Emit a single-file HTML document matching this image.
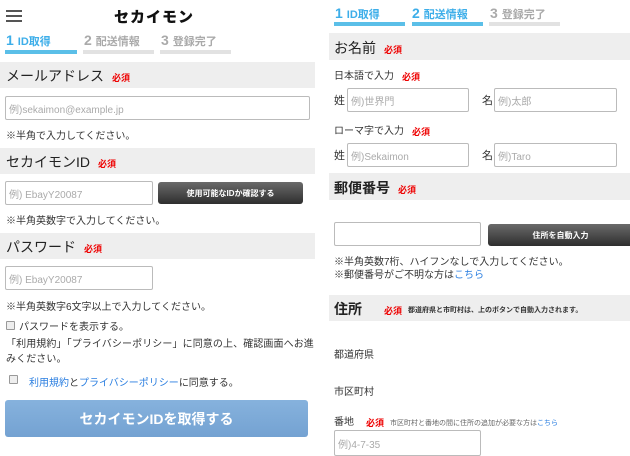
<!DOCTYPE html>
<html><head><meta charset="utf-8"><style>
*{margin:0;padding:0;box-sizing:border-box}
body{width:630px;height:450px;overflow:hidden;background:#fff;font-family:"Liberation Sans","Noto Sans CJK JP",sans-serif;color:#333;position:relative}
.a{position:absolute;white-space:nowrap}
.hd{position:absolute;background:#eeeeee}
.ht{position:absolute;font-size:14px;color:#222;white-space:nowrap}
.req{color:#e00;font-size:9px;font-weight:bold;margin-left:8px;vertical-align:middle}
.in{position:absolute;border:1px solid #bbb;border-radius:2px;background:#fff;font-size:10px;color:#aaa;padding-left:3px;display:flex;align-items:center}
.sm{font-size:10px;color:#333}
.btn{position:absolute;border-radius:3px;background:linear-gradient(#6a6a6a,#2e2e2e);color:#fff;font-size:8px;font-weight:bold;display:flex;align-items:center;justify-content:center}
.bar{position:absolute;height:4px}
.st{position:absolute;font-size:11px;font-weight:bold;white-space:nowrap}
.st b{font-size:14px;margin-right:4px}
.cb{position:absolute;width:9px;height:9px;border:1px solid #999;background:#eee;border-radius:1px}
a{color:#2a7ee0;text-decoration:none}
</style></head><body>
<div class="a" style="left:6px;top:10px;width:16px;height:2px;background:#555"></div>
<div class="a" style="left:6px;top:15px;width:16px;height:2px;background:#555"></div>
<div class="a" style="left:6px;top:20px;width:16px;height:2px;background:#555"></div>
<div class="a" style="left:114px;top:6px;font-size:15px;font-weight:900;color:#111;letter-spacing:1px">セカイモン</div>
<div class="st" style="left:6px;top:32px;color:#3daee9"><b>1</b>ID取得</div>
<div class="st" style="left:84px;top:32px;color:#aaa"><b>2</b>配送情報</div>
<div class="st" style="left:161px;top:32px;color:#aaa"><b>3</b>登録完了</div>
<div class="bar" style="left:5px;top:50px;width:72px;background:#5bbfe8"></div>
<div class="bar" style="left:83px;top:50px;width:71px;background:#e2e2e2"></div>
<div class="bar" style="left:160px;top:50px;width:71px;background:#e2e2e2"></div>

<div class="hd" style="left:0;top:62px;width:315px;height:26px"></div>
<div class="ht" style="left:6px;top:66px">メールアドレス<span class="req">必須</span></div>
<div class="in" style="left:5px;top:96px;width:305px;height:24px">例)sekaimon@example.jp</div>
<div class="a sm" style="left:6px;top:127px">※半角で入力してください。</div>

<div class="hd" style="left:0;top:148px;width:315px;height:26px"></div>
<div class="ht" style="left:6px;top:152px">セカイモンID<span class="req">必須</span></div>
<div class="in" style="left:5px;top:181px;width:148px;height:24px">例) EbayY20087</div>
<div class="btn" style="left:158px;top:182px;width:145px;height:22px">使用可能なIDか確認する</div>
<div class="a sm" style="left:6px;top:212px">※半角英数字で入力してください。</div>

<div class="hd" style="left:0;top:233px;width:315px;height:26px"></div>
<div class="ht" style="left:6px;top:237px">パスワード<span class="req">必須</span></div>
<div class="in" style="left:5px;top:266px;width:148px;height:24px">例) EbayY20087</div>
<div class="a sm" style="left:6px;top:298px">※半角英数字6文字以上で入力してください。</div>
<div class="cb" style="left:6px;top:321px"></div>
<div class="a sm" style="left:19px;top:318px">パスワードを表示する。</div>
<div class="a sm" style="left:6px;top:337px;line-height:15px;white-space:normal;width:309px;letter-spacing:0.1px">「利用規約」「プライバシーポリシー」に同意の上、確認画面へお進みください。</div>
<div class="cb" style="left:9px;top:375px"></div>
<div class="a sm" style="left:29px;top:374px"><a>利用規約</a>と<a>プライバシーポリシー</a>に同意する。</div>
<div class="a" style="left:5px;top:400px;width:303px;height:37px;border-radius:3px;background:linear-gradient(#86b2dd,#74a2d2);color:#fff;font-size:14px;font-weight:bold;display:flex;align-items:center;justify-content:center">セカイモンIDを取得する</div>

<div class="st" style="left:335px;top:5px;color:#3daee9"><b>1</b>ID取得</div>
<div class="st" style="left:412px;top:5px;color:#3daee9"><b>2</b>配送情報</div>
<div class="st" style="left:490px;top:5px;color:#aaa"><b>3</b>登録完了</div>
<div class="bar" style="left:334px;top:22px;width:71px;background:#5bbfe8"></div>
<div class="bar" style="left:412px;top:22px;width:71px;background:#5bbfe8"></div>
<div class="bar" style="left:489px;top:22px;width:71px;background:#e2e2e2"></div>

<div class="hd" style="left:329px;top:33px;width:301px;height:27px"></div>
<div class="ht" style="left:334px;top:38px">お名前<span class="req">必須</span></div>
<div class="a sm" style="left:334px;top:67px">日本語で入力<span class="req">必須</span></div>
<div class="a sm" style="left:334px;top:92px;font-size:11px">姓</div>
<div class="in" style="left:347px;top:88px;width:122px;height:24px">例)世界門</div>
<div class="a sm" style="left:482px;top:92px;font-size:11px">名</div>
<div class="in" style="left:494px;top:88px;width:123px;height:24px">例)太郎</div>
<div class="a sm" style="left:334px;top:122px">ローマ字で入力<span class="req">必須</span></div>
<div class="a sm" style="left:334px;top:147px;font-size:11px">姓</div>
<div class="in" style="left:347px;top:143px;width:122px;height:24px">例)Sekaimon</div>
<div class="a sm" style="left:482px;top:147px;font-size:11px">名</div>
<div class="in" style="left:494px;top:143px;width:123px;height:24px">例)Taro</div>

<div class="hd" style="left:329px;top:173px;width:301px;height:27px"></div>
<div class="ht" style="left:334px;top:178px;font-weight:bold">郵便番号<span class="req">必須</span></div>
<div class="in" style="left:334px;top:222px;width:147px;height:24px"></div>
<div class="btn" style="left:488px;top:224px;width:145px;height:22px">住所を自動入力</div>
<div class="a sm" style="left:334px;top:253px">※半角英数7桁、ハイフンなしで入力してください。</div>
<div class="a sm" style="left:334px;top:266px">※郵便番号がご不明な方は<a>こちら</a></div>

<div class="hd" style="left:329px;top:295px;width:301px;height:26px"></div>
<div class="ht" style="left:334px;top:299px;font-weight:bold">住所<span class="req" style="margin-left:22px">必須</span><span style="font-size:7px;font-weight:bold;color:#333;margin-left:6px;vertical-align:middle">都道府県と市町村は、上のボタンで自動入力されます。</span></div>
<div class="a sm" style="left:334px;top:346px">都道府県</div>
<div class="a sm" style="left:334px;top:383px">市区町村</div>
<div class="a sm" style="left:334px;top:413px">番地<span class="req" style="margin-left:12px">必須</span><span style="font-size:7px;color:#666;margin-left:6px">市区町村と番地の間に住所の追加が必要な方は<a>こちら</a></span></div>
<div class="in" style="left:334px;top:430px;width:147px;height:26px">例)4-7-35</div>
</body></html>
